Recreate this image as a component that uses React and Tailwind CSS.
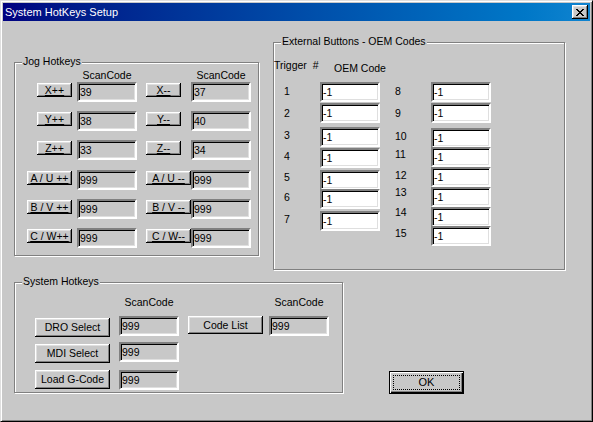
import React from "react";

const raised =
  "bg-[#c8c8c8] shadow-[inset_-1px_-1px_0_#000,inset_1px_1px_0_#fff,inset_-2px_-2px_0_#808080,inset_2px_2px_0_#dfdfdf] flex items-center justify-center";
const sunken =
  "border-2 border-t-[#808080] border-l-[#808080] border-b-white border-r-white shadow-[inset_1px_1px_0_#000,inset_-1px_-1px_0_#dfdfdf] flex items-center pl-[1px] leading-[13px]";

function GroupBox({ label, className, children }) {
  return (
    <div
      className={`relative border border-[#808080] shadow-[1px_1px_0_#fff,inset_1px_1px_0_#fff] ${className}`}
    >
      <span className="absolute -top-[8px] left-[7px] bg-[#c8c8c8] px-[1px] leading-[13px] whitespace-nowrap">
        {label}
      </span>
      {children}
    </div>
  );
}

function Field({ value, white, className = "" }) {
  return (
    <div
      className={`${sunken} w-[60px] h-[20px] ${white ? "bg-white" : "bg-[#c8c8c8]"} ${className}`}
    >
      {value}
    </div>
  );
}

function CloseGlyph() {
  const px = [
    [0, 0], [1, 0], [6, 0], [7, 0],
    [1, 1], [2, 1], [5, 1], [6, 1],
    [2, 2], [3, 2], [4, 2], [5, 2],
    [3, 3], [4, 3],
    [2, 4], [3, 4], [4, 4], [5, 4],
    [1, 5], [2, 5], [5, 5], [6, 5],
    [0, 6], [1, 6], [6, 6], [7, 6],
  ];
  return (
    <svg width="8" height="7" viewBox="0 0 8 7" shapeRendering="crispEdges">
      {px.map(([x, y]) => (
        <rect key={`${x}-${y}`} x={x} y={y} width="1" height="1" fill="#000" />
      ))}
    </svg>
  );
}

const jogRows = [
  { a: "X++", av: "39", b: "X--", bv: "37", wide: false, mt: "" },
  { a: "Y++", av: "38", b: "Y--", bv: "40", wide: false, mt: "mt-[9px]" },
  { a: "Z++", av: "33", b: "Z--", bv: "34", wide: false, mt: "mt-[9px]" },
  { a: "A / U ++", av: "999", b: "A / U --", bv: "999", wide: true, mt: "mt-[10px]" },
  { a: "B / V ++", av: "999", b: "B / V --", bv: "999", wide: true, mt: "mt-[9px]" },
  { a: "C / W++", av: "999", b: "C / W--", bv: "999", wide: true, mt: "mt-[9px]" },
];

const leftLabels = [
  { n: "1", mt: "mt-[3px]" },
  { n: "2", mt: "mt-[9px]" },
  { n: "3", mt: "mt-[9px]" },
  { n: "4", mt: "mt-[8px]" },
  { n: "5", mt: "mt-[8px]" },
  { n: "6", mt: "mt-[7px]" },
  { n: "7", mt: "mt-[9px]" },
];
const leftInputs = ["", "mt-[1px]", "mt-[4px]", "mt-[1px]", "mt-[2px]", "-mt-[1px]", "mt-[2px]"];

const rightLabels = [
  { n: "8", mt: "mt-[3px]" },
  { n: "9", mt: "mt-[9px]" },
  { n: "10", mt: "mt-[10px]" },
  { n: "11", mt: "mt-[5px]" },
  { n: "12", mt: "mt-[8px]" },
  { n: "13", mt: "mt-[4px]" },
  { n: "14", mt: "mt-[7px]" },
  { n: "15", mt: "mt-[8px]" },
];
const rightInputs = ["", "mt-[1px]", "mt-[5px]", "-mt-[1px]", "", "", "", "-mt-[1px]"];

export default function App() {
  return (
    <div className="w-[593px] h-[422px] bg-[#c8c8c8] border border-t-[#dfdfdf] border-l-[#dfdfdf] border-r-black border-b-black shadow-[inset_1px_1px_0_#fff,inset_-1px_-1px_0_#808080] p-[2px] font-['Liberation_Sans',Arial,sans-serif] text-[10.5px] leading-[13px] text-black overflow-hidden">
      {/* title bar */}
      <div className="h-[18px] flex items-center justify-between bg-gradient-to-r from-[#000080] to-[#1084d0] pl-[2px] pr-[2px]">
        <span className="text-white text-[11px]">System HotKeys Setup</span>
        <div className={`${raised} w-[16px] h-[14px]`}>
          <CloseGlyph />
        </div>
      </div>

      {/* upper row */}
      <div className="flex items-start">
        <GroupBox label="Jog Hotkeys" className="ml-[11px] mt-[41px] w-[245px] h-[194px]">
          <div className="pt-[6px] flex">
            <div className="w-[57px]" />
            <div className="ml-[5px] w-[60px] text-center">ScanCode</div>
            <div className="ml-[9px] w-[45px]" />
            <div className="w-[60px] text-center">ScanCode</div>
          </div>
          <div className="flex flex-col">
            {jogRows.map((r) => (
              <div key={r.a} className={`flex items-start h-[20px] ${r.mt}`}>
                <div className="w-[57px] flex justify-end">
                  <div className={`${raised} ${r.wide ? "w-[45px]" : "w-[35px]"} h-[14px] mt-[1px] underline underline-offset-[1px]`}>
                    {r.a}
                  </div>
                </div>
                <Field value={r.av} className="ml-[5px]" />
                <div className="ml-[9px] w-[45px] flex">
                  <div className={`${raised} ${r.wide ? "w-[45px]" : "w-[35px]"} h-[14px] mt-[1px] underline underline-offset-[1px]`}>
                    {r.b}
                  </div>
                </div>
                <Field value={r.bv} />
              </div>
            ))}
          </div>
        </GroupBox>

        <GroupBox label="External Buttons - OEM Codes" className="ml-[14px] mt-[21px] w-[292px] h-[228px]">
          <div className="h-[39px] flex items-start">
            <div className="w-[60px] mt-[16px] whitespace-pre">Trigger  #</div>
            <div className="mt-[19px]">OEM Code</div>
          </div>
          <div className="flex items-start">
            <div className="w-[46px] pl-[10px] flex flex-col">
              {leftLabels.map((l) => (
                <div key={l.n} className={`h-[13px] ${l.mt}`}>{l.n}</div>
              ))}
            </div>
            <div className="w-[60px] flex flex-col">
              {leftInputs.map((m, i) => (
                <Field key={i} value="-1" white className={m} />
              ))}
            </div>
            <div className="w-[51px] pl-[15px] flex flex-col">
              {rightLabels.map((l) => (
                <div key={l.n} className={`h-[13px] ${l.mt}`}>{l.n}</div>
              ))}
            </div>
            <div className="w-[60px] flex flex-col">
              {rightInputs.map((m, i) => (
                <Field key={i} value="-1" white className={m} />
              ))}
            </div>
          </div>
        </GroupBox>
      </div>

      {/* lower row */}
      <div className="flex items-start">
        <GroupBox label="System Hotkeys" className="ml-[11px] mt-[12px] w-[329px] h-[111px]">
          <div className="flex items-start">
            <div className="ml-[20px] w-[75px] pt-[35px] flex flex-col">
              <div className={`${raised} h-[19px]`}>DRO Select</div>
              <div className={`${raised} h-[19px] mt-[7px]`}>MDI Select</div>
              <div className={`${raised} h-[19px] mt-[7px]`}>Load G-Code</div>
            </div>
            <div className="ml-[9px] w-[60px] pt-[13px] flex flex-col">
              <div className="h-[13px] text-center">ScanCode</div>
              <Field value="999" className="mt-[7px]" />
              <Field value="999" className="mt-[6px]" />
              <Field value="999" className="mt-[8px]" />
            </div>
            <div className="ml-[9px] w-[75px] pt-[33px]">
              <div className={`${raised} h-[18px]`}>Code List</div>
            </div>
            <div className="ml-[6px] w-[60px] pt-[13px] flex flex-col">
              <div className="h-[13px] text-center">ScanCode</div>
              <Field value="999" className="mt-[7px]" />
            </div>
          </div>
        </GroupBox>

        <div className="ml-[46px] mt-[101px] relative w-[75px] h-[23px] border border-black bg-[#c8c8c8] shadow-[inset_1px_1px_0_#fff,inset_-1px_-1px_0_#000,inset_-2px_-2px_0_#808080] flex items-center justify-center text-[11px]">
          OK
          <span className="absolute inset-[3px] border border-dotted border-black" />
        </div>
      </div>
    </div>
  );
}
